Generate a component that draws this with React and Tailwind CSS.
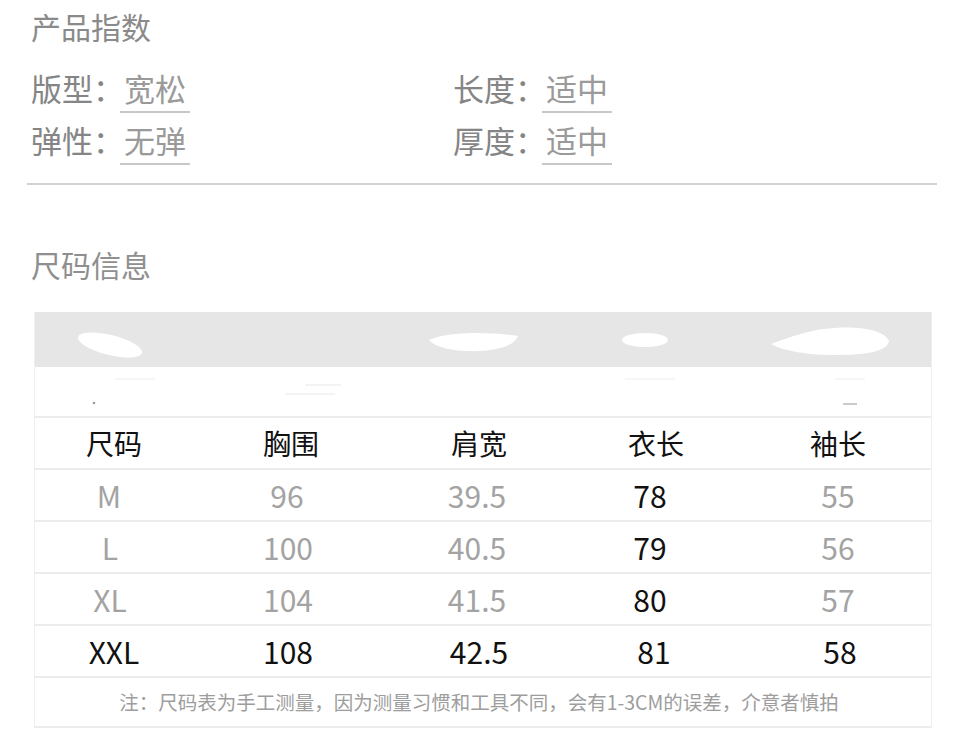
import React from "react";

const FONT = { fontFamily: '"Noto Sans CJK SC", "Noto Sans", sans-serif' };

function Field({ label, value }) {
  return (
    <div className="flex items-start">
      <span className="text-[31px] leading-[31px] text-[#858585]">{label}：</span>
      <span className="-ml-[4px] px-[4px] pb-[8px] border-b-2 border-[#c8c8c8] text-[31px] leading-[31px] text-[#9a9a9a]">
        {value}
      </span>
    </div>
  );
}

const G = "text-[#a3a3a3]";
const D = "text-[#111111]";

const rows = [
  { c: ["M", "96", "39.5", "78", "55"], k: [G + " pr-[10px]", G + " pr-[8px]", G + " pr-[4px]", D + " pr-[12px]", G] },
  { c: ["L", "100", "40.5", "79", "56"], k: [G + " pr-[8px]", G + " pr-[6px]", G + " pr-[4px]", D + " pr-[12px]", G] },
  { c: ["XL", "104", "41.5", "80", "57"], k: [G + " pr-[8px]", G + " pr-[6px]", G + " pr-[4px]", D + " pr-[12px]", G] },
  { c: ["XXL", "108", "42.5", "81", "58"], k: [D, D + " pr-[6px]", D, D + " pr-[4px]", D + " pl-[4px]"] },
];

export default function App() {
  return (
    <div className="w-[959px] h-[743px] bg-white overflow-hidden" style={FONT}>
      <div className="pl-[31px] pt-[11px]">
        <div className="text-[30px] leading-[31px] text-[#8a8a8a]">产品指数</div>
        <div className="mt-[30px] flex">
          <div className="w-[422px]">
            <Field label="版型" value="宽松" />
          </div>
          <Field label="长度" value="适中" />
        </div>
        <div className="mt-[11px] flex">
          <div className="w-[422px]">
            <Field label="弹性" value="无弹" />
          </div>
          <Field label="厚度" value="适中" />
        </div>
      </div>
      <div className="ml-[27px] mt-[18px] w-[910px] h-[2px] bg-[#d2d2d2]" />
      <div className="pl-[31px] mt-[64px] text-[30px] leading-[30px] text-[#8f8f8f]">尺码信息</div>

      <div className="ml-[34px] mt-[33px] w-[898px] border-x border-[#efefef]">
        <div className="relative h-[55px] bg-[#e6e6e6]">
          <svg className="absolute inset-0" width="898" height="55" viewBox="0 0 898 55">
            <ellipse cx="75" cy="33" rx="33" ry="10" transform="rotate(14 75 33)" fill="#ffffff" />
            <path d="M394,28 C410,20 450,19 483,24 C478,36 455,40 430,39 C410,38 398,33 394,28 Z" fill="#ffffff" />
            <ellipse cx="610" cy="28" rx="23" ry="7" fill="#ffffff" />
            <path d="M736,32 C758,24 776,17 800,16 C828,14 850,19 854,29 C852,40 830,43 800,43 C770,43 746,38 736,32 Z" fill="#ffffff" />
          </svg>
        </div>
        <div className="relative h-[49px] bg-white">
          <svg className="absolute inset-0" width="898" height="49" viewBox="0 0 898 49">
            <line x1="270" y1="18" x2="306" y2="18" stroke="#efefef" strokeWidth="1.5" />
            <line x1="250" y1="27" x2="300" y2="27" stroke="#f0f0f0" strokeWidth="1.5" />
            <line x1="80" y1="12" x2="120" y2="12" stroke="#f3f3f3" strokeWidth="1.5" />
            <line x1="590" y1="12" x2="640" y2="12" stroke="#f3f3f3" strokeWidth="1.5" />
            <line x1="800" y1="12" x2="830" y2="12" stroke="#f3f3f3" strokeWidth="1.5" />
            <circle cx="59" cy="36" r="1.3" fill="#9a9a9a" />
            <line x1="808" y1="37" x2="822" y2="37" stroke="#b8b8b8" strokeWidth="1.5" />
          </svg>
        </div>
        <div className="grid grid-cols-[158px_196px_180px_174px_190px] h-[52px] border-t-2 border-[#ececec] items-center text-center text-[28px] leading-[28px] text-[#111111]">
          <span>尺码</span>
          <span>胸围</span>
          <span>肩宽</span>
          <span>衣长</span>
          <span>袖长</span>
        </div>
        {rows.map((r, i) => (
          <div
            key={i}
            className="grid grid-cols-[158px_196px_180px_174px_190px] h-[52px] border-t-2 border-[#ececec] items-center text-center text-[30px] leading-[30px]"
          >
            {r.c.map((v, j) => (
              <span key={j} className={r.k[j]}>
                {v}
              </span>
            ))}
          </div>
        ))}
        <div className="h-[52px] border-y-2 border-[#ececec] flex items-center justify-center pr-[8px] text-[19.5px] leading-[20px] text-[#9d9d9d]">
          注：尺码表为手工测量，因为测量习惯和工具不同，会有1-3CM的误差，介意者慎拍
        </div>
      </div>
    </div>
  );
}
